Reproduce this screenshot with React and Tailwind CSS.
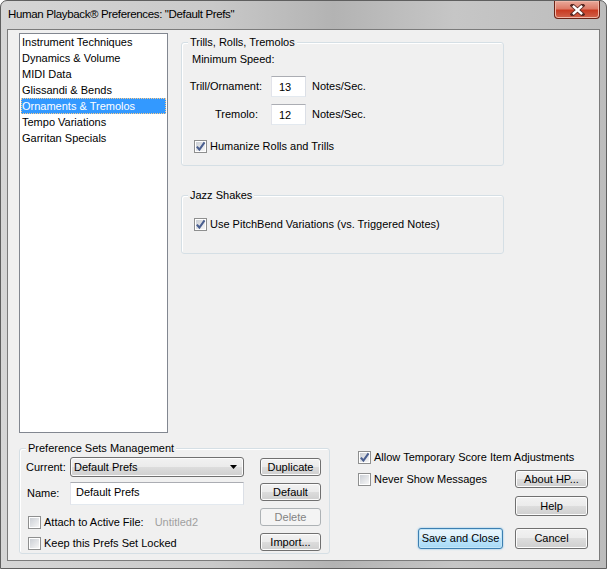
import React from 'react';

const FONT = { fontFamily: '"Liberation Sans", Arial, sans-serif' };

const CATEGORIES = [
  'Instrument Techniques',
  'Dynamics & Volume',
  'MIDI Data',
  'Glissandi & Bends',
  'Ornaments & Tremolos',
  'Tempo Variations',
  'Garritan Specials',
];

function Checkbox({ checked }) {
  return (
    <span className="block w-[13px] h-[13px] shrink-0 border border-[#8e8f8f] bg-white p-[1px]">
      <span className="relative block w-full h-full bg-[linear-gradient(135deg,#cbcfd5,#f6f6f6)]">
        {checked && (
          <svg viewBox="0 0 9 9" className="absolute -left-[1px] -top-[1px] w-[11px] h-[11px]">
            <path d="M1.5 4.6 L3.6 7 L7.8 1.2" fill="none" stroke="#4a5f90" strokeWidth="1.7" />
          </svg>
        )}
      </span>
    </span>
  );
}

function CheckRow({ checked, label, extra, className = '' }) {
  return (
    <div className={`flex items-center h-[13px] ${className}`}>
      <Checkbox checked={checked} />
      <span className="ml-[3px] leading-[13px] whitespace-nowrap">{label}</span>
      {extra && <span className="ml-[11px] leading-[13px] whitespace-nowrap text-[#a0a0a0]">{extra}</span>}
    </div>
  );
}

function Button({ children, className = '', primary, disabled }) {
  let look =
    'border-[#707070] text-black bg-[linear-gradient(to_bottom,#f2f2f2_0%,#ebebeb_50%,#dddddd_50%,#cfcfcf_100%)] shadow-[inset_0_0_0_1px_#fcfcfc]';
  if (primary)
    look =
      'border-[#3c7fb1] text-black bg-[linear-gradient(to_bottom,#eaf6fd_0%,#d9f0fc_50%,#bee6fd_50%,#a7d9f5_100%)] shadow-[inset_0_0_0_1px_#c4e5f6,0_0_2px_#6fb8e8]';
  if (disabled) look = 'border-[#adb2b5] text-[#838383] bg-[#f4f4f4]';
  return (
    <div className={`flex items-center justify-center rounded-[3px] border leading-[13px] ${look} ${className}`}>
      {children}
    </div>
  );
}

function Group({ title, className = '', children }) {
  return (
    <div className={`relative rounded-[3px] border border-[#d5dfe5] shadow-[inset_1px_1px_0_#fff] ${className}`}>
      <span className="absolute -top-[7px] left-[6px] px-[2px] bg-[#f0f0f0] leading-[13px] whitespace-nowrap">
        {title}
      </span>
      {children}
    </div>
  );
}

function TextBox({ value, className = '' }) {
  return (
    <div className={`border border-[#abadb3] border-l-[#e2e3ea] border-r-[#dbdfe6] border-b-[#e3e9ef] bg-white leading-[13px] ${className}`}>
      {value}
    </div>
  );
}

export default function App() {
  return (
    <div
      className="relative w-[607px] h-[569px] text-[11px] text-black overflow-hidden rounded-t-[7px] border border-[#5f5f5f] bg-[#b9b9b9] bg-[linear-gradient(to_right,#d6d6d6_0%,#c9c9c9_35%,#b3b3b3_55%,#c6c6c6_75%,#bcbcbc_100%)]"
      style={FONT}
    >
      {/* title bar */}
      <div className="flex items-start h-[28px]">
        <span className="pl-[7px] pt-[7px] text-[11.5px] tracking-[-0.35px] leading-[13px] text-black">
          Human Playback® Preferences: "Default Prefs"
        </span>
        <div className="ml-auto mr-[6px] mt-0 w-[46px] h-[18px] rounded-b-[4px] border border-t-0 border-[#6b2316] bg-[linear-gradient(to_bottom,#e9a99a_0%,#dd7b68_45%,#c93b22_55%,#d0634c_100%)] shadow-[inset_0_0_0_1px_#f0b7a8] flex items-center justify-center">
          <svg viewBox="0 0 14 12" className="w-[15px] h-[12px]">
            <path d="M2 1.5 L12 10.5 M12 1.5 L2 10.5" stroke="#5a2a24" strokeWidth="4" strokeLinecap="square" />
            <path d="M2.4 1.8 L11.6 10.2 M11.6 1.8 L2.4 10.2" stroke="#ffffff" strokeWidth="2.4" />
          </svg>
        </div>
      </div>

      {/* client area */}
      <div className="mx-[6px] h-[532px] border border-[#7b7b7b] bg-[#f0f0f0]">
        {/* top row */}
        <div className="flex pl-[11px] pt-[3px]">
          <div className="w-[149px] h-[400px] border border-[#828790] bg-white">
            {CATEGORIES.map((c, i) => (
              <div
                key={c}
                className={`mx-[1px] h-[16px] pl-[1px] leading-[16px] whitespace-nowrap ${
                  i === 4 ? 'bg-[#3399ff] text-white outline outline-1 outline-dotted outline-[#ffcc88] -outline-offset-1' : ''
                }`}
              >
                {c}
              </div>
            ))}
          </div>

          <div className="ml-[13px] pt-[9px] flex flex-col">
            <Group title="Trills, Rolls, Tremolos" className="w-[323px] h-[124px]">
              <div className="pl-[10px] pt-[10px] leading-[13px]">Minimum Speed:</div>
              <div className="flex items-center mt-[10px] pl-[7px]">
                <span className="w-[73px] text-right whitespace-nowrap">Trill/Ornament:</span>
                <TextBox value="13" className="ml-[9px] w-[35px] h-[21px] pl-[7px] pt-[4px]" />
                <span className="ml-[6px] whitespace-nowrap">Notes/Sec.</span>
              </div>
              <div className="flex items-center mt-[7px] pl-[7px]">
                <span className="w-[73px] text-right pr-[4px]">Tremolo:</span>
                <TextBox value="12" className="ml-[9px] w-[35px] h-[21px] pl-[7px] pt-[4px]" />
                <span className="ml-[6px] whitespace-nowrap">Notes/Sec.</span>
              </div>
              <CheckRow checked label="Humanize Rolls and Trills" className="mt-[15px] ml-[12px]" />
            </Group>

            <Group title="Jazz Shakes" className="mt-[29px] w-[323px] h-[59px]">
              <CheckRow
                checked
                label="Use PitchBend Variations (vs. Triggered Notes)"
                className="mt-[22px] ml-[12px]"
              />
            </Group>
          </div>
        </div>

        {/* bottom row */}
        <div className="flex">
          <Group title="Preference Sets Management" className="ml-[11px] mt-[15px] w-[311px] h-[106px] flex">
            <div className="w-[240px] pt-[8px]">
              <div className="flex items-center h-[20px]">
                <span className="pl-[6px] w-[50px]">Current:</span>
                <div className="relative w-[174px] h-[20px] rounded-[3px] border border-[#707070] bg-[linear-gradient(to_bottom,#f2f2f2_0%,#ebebeb_50%,#dddddd_50%,#cfcfcf_100%)] shadow-[inset_0_0_0_1px_#fcfcfc] pl-[3px] leading-[18px]">
                  Default Prefs
                  <svg viewBox="0 0 7 4" className="absolute right-[6px] top-[7px] w-[7px] h-[4px]">
                    <path d="M0 0 H7 L3.5 4 Z" fill="#000" />
                  </svg>
                </div>
              </div>
              <div className="flex items-center h-[23px] mt-[5px]">
                <span className="pl-[7px] w-[50px]">Name:</span>
                <TextBox value="Default Prefs" className="w-[174px] h-[23px] pl-[5px] pt-[3px]" />
              </div>
              <CheckRow label="Attach to Active File:" extra="Untitled2" className="mt-[11px] ml-[8px]" />
              <CheckRow label="Keep this Prefs Set Locked" className="mt-[8px] ml-[8px]" />
            </div>
            <div className="flex flex-col gap-[7px] pt-[9px]">
              <Button className="w-[61px] h-[18px]">Duplicate</Button>
              <Button className="w-[61px] h-[18px]">Default</Button>
              <Button disabled className="w-[61px] h-[18px]">Delete</Button>
              <Button className="w-[61px] h-[18px]">Import...</Button>
            </div>
          </Group>

          <div className="flex-1 flex flex-col">
            <CheckRow checked label="Allow Temporary Score Item Adjustments" className="mt-[18px] ml-[28px]" />
            <div className="flex items-center mt-[6px] h-[18px]">
              <CheckRow label="Never Show Messages" className="ml-[28px]" />
              <Button className="ml-auto mr-[11px] w-[73px] h-[18px]">About HP...</Button>
            </div>
            <div className="flex justify-end mt-[8px] pr-[11px]">
              <Button className="w-[73px] h-[20px]">Help</Button>
            </div>
            <div className="flex justify-end gap-[12px] mt-[12px] pr-[11px]">
              <Button primary className="w-[85px] h-[21px]">Save and Close</Button>
              <Button className="w-[73px] h-[21px]">Cancel</Button>
            </div>
          </div>
        </div>
      </div>
    </div>
  );
}
